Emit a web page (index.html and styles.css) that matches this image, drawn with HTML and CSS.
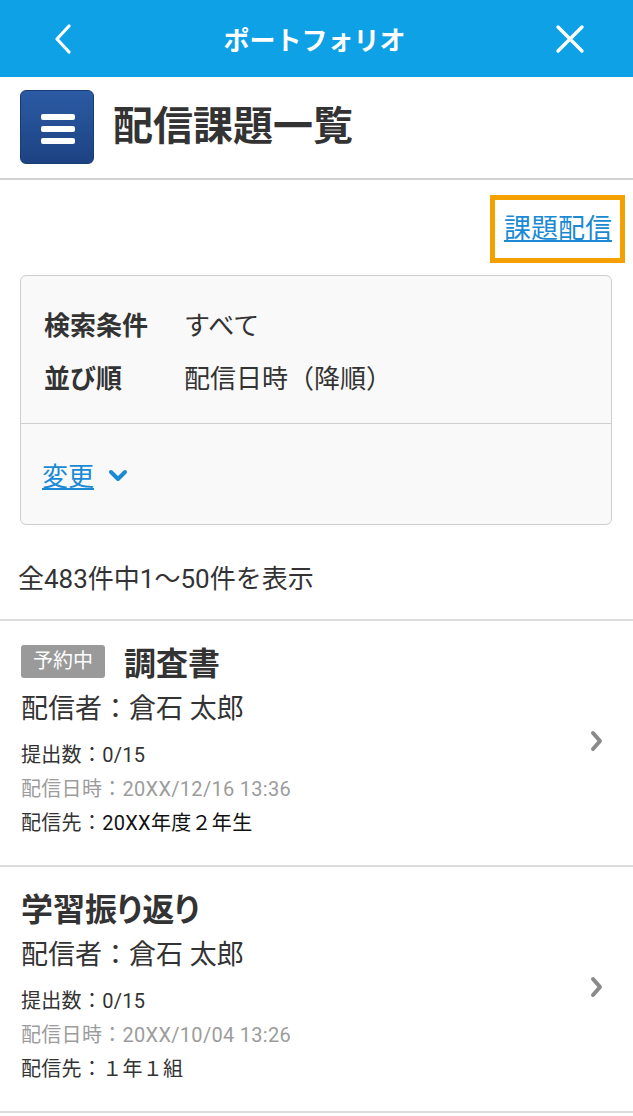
FILE: index.html
```html
<!DOCTYPE html>
<html lang="ja">
<head>
    <meta charset="UTF-8">
    <meta name="viewport" content="width=device-width, initial-scale=1.0">
    <title>配信課題一覧</title>
    <link rel="stylesheet" href="styles.css">
</head>
<body>
    <header class="topbar">
        <button class="nav-btn" aria-label="戻る">
            <svg width="22" height="30" viewBox="0 0 22 30"><path d="M17 2 L5 15 L17 28" fill="none" stroke="#fff" stroke-width="3.2" stroke-linecap="round" stroke-linejoin="round"/></svg>
        </button>
        <h1>ポートフォリオ</h1>
        <button class="nav-btn" aria-label="閉じる">
            <svg width="30" height="30" viewBox="0 0 30 30"><path d="M3 3 L27 27 M27 3 L3 27" fill="none" stroke="#fff" stroke-width="3.4" stroke-linecap="round"/></svg>
        </button>
    </header>

    <section class="page-title">
        <div class="menu-icon">
            <span></span>
            <span></span>
            <span></span>
        </div>
        <h2>配信課題一覧</h2>
    </section>

    <div class="actions">
        <a href="#" class="deliver-link">課題配信</a>
    </div>

    <div class="search-box">
        <dl class="conditions">
            <div class="cond-row">
                <dt>検索条件</dt>
                <dd>すべて</dd>
            </div>
            <div class="cond-row">
                <dt>並び順</dt>
                <dd>配信日時（降順）</dd>
            </div>
        </dl>
        <div class="search-footer">
            <a href="#" class="change-link">変更</a>
            <svg class="down" width="20" height="14" viewBox="0 0 20 14"><path d="M3 3 L10 10 L17 3" fill="none" stroke="#1a8ad4" stroke-width="4" stroke-linecap="round" stroke-linejoin="round"/></svg>
        </div>
    </div>

    <p class="count">全483件中1〜50件を表示</p>

    <ul class="task-list">
        <li class="task-item">
            <div class="task-body">
                <div class="task-head">
                    <span class="badge">予約中</span>
                    <h3>調査書</h3>
                </div>
                <p class="sender">配信者：倉石 太郎</p>
                <p class="meta">提出数：0/15</p>
                <p class="meta date">配信日時：20XX/12/16 13:36</p>
                <p class="meta">配信先：<span class="dark">20XX年度２年生</span></p>
            </div>
            <svg class="arrow" width="16" height="22" viewBox="0 0 16 22"><path d="M4 3 L11 11 L4 19" fill="none" stroke="#8a8a8a" stroke-width="4" stroke-linecap="round" stroke-linejoin="round"/></svg>
        </li>
        <li class="task-item">
            <div class="task-body">
                <div class="task-head">
                    <h3>学習振り返り</h3>
                </div>
                <p class="sender">配信者：倉石 太郎</p>
                <p class="meta">提出数：0/15</p>
                <p class="meta date">配信日時：20XX/10/04 13:26</p>
                <p class="meta">配信先：１年１組</p>
            </div>
            <svg class="arrow" width="16" height="22" viewBox="0 0 16 22"><path d="M4 3 L11 11 L4 19" fill="none" stroke="#8a8a8a" stroke-width="4" stroke-linecap="round" stroke-linejoin="round"/></svg>
        </li>
    </ul>
</body>
</html>
```

FILE: styles.css
```css
body {
    font-family: Roboto, "Noto Sans CJK JP", sans-serif;
    color: #333;
    margin: 0;
    padding: 0;
    background-color: #fff;
}
p, h1, h2, h3, dl, dd, ul {
    margin: 0;
    padding: 0;
}
.topbar {
    display: flex;
    align-items: center;
    justify-content: space-between;
    height: 77px;
    padding: 0 48px 0 52px;
    background-color: #0ea1e6;
}
.topbar h1 {
    color: #fff;
    font-size: 26px;
    font-weight: bold;
}
.nav-btn {
    display: flex;
    background: none;
    border: none;
    padding: 0;
    cursor: pointer;
}
.page-title {
    display: flex;
    align-items: center;
    padding: 13px 20px 14px;
    border-bottom: 2px solid #d2d2d2;
}
.menu-icon {
    display: flex;
    flex-direction: column;
    justify-content: center;
    gap: 6px;
    width: 74px;
    height: 74px;
    padding: 4px 0 0 20px;
    box-sizing: border-box;
    border: 1px solid #183c70;
    border-radius: 6px;
    background: linear-gradient(#2b5ba4, #1d4282);
}
.menu-icon span {
    display: block;
    width: 34px;
    height: 6px;
    border-radius: 2px;
    background-color: #fff;
}
.page-title h2 {
    margin-left: 19px;
    font-size: 40px;
    font-weight: bold;
    line-height: 1;
}
.actions {
    display: flex;
    justify-content: flex-end;
    padding: 15px 8px 0;
}
.deliver-link {
    padding: 14px 8px 14px 9px;
    border: 5px solid #f4a100;
    font-size: 27px;
    line-height: 30px;
    color: #1a8ad4;
}
.search-box {
    margin: 12px 21px 0 20px;
    border: 1px solid #cfcfcf;
    border-radius: 6px;
    background-color: #f9f9f9;
}
.conditions {
    padding: 24px 23px 17px;
}
.cond-row {
    display: flex;
    font-size: 26px;
    line-height: 53px;
}
.cond-row dt {
    width: 140px;
    font-weight: bold;
}
.search-footer {
    display: flex;
    align-items: center;
    gap: 14px;
    height: 100px;
    padding-left: 21px;
    border-top: 1px solid #cfcfcf;
}
.change-link {
    font-size: 26px;
    color: #1a8ad4;
}
.down {
    margin-top: 4px;
}
.count {
    margin-top: 36px;
    padding: 0 18px 22px;
    font-size: 26px;
    line-height: 36px;
}
.task-list {
    list-style: none;
    border-bottom: 2px solid #dcdcdc;
}
.task-item {
    display: flex;
    align-items: center;
    justify-content: space-between;
    padding: 20px 28px 25px 21px;
    border-top: 2px solid #dcdcdc;
}
.task-head {
    display: flex;
    align-items: center;
    gap: 19px;
    height: 40px;
}
.badge {
    padding: 0 12px;
    border-radius: 3px;
    background-color: #9a9a9a;
    color: #fff;
    font-size: 20px;
    line-height: 33px;
}
.task-head h3 {
    font-size: 32px;
    font-weight: bold;
    font-feature-settings: "palt";
}
.sender {
    margin-top: 6px;
    margin-bottom: 7px;
    font-size: 27px;
    line-height: 44px;
}
.meta {
    font-size: 20px;
    letter-spacing: 0.3px;
    line-height: 34px;
    color: #333;
}
.meta .dark {
    color: #111;
}
.date {
    color: #9c9c9c;
}
```
